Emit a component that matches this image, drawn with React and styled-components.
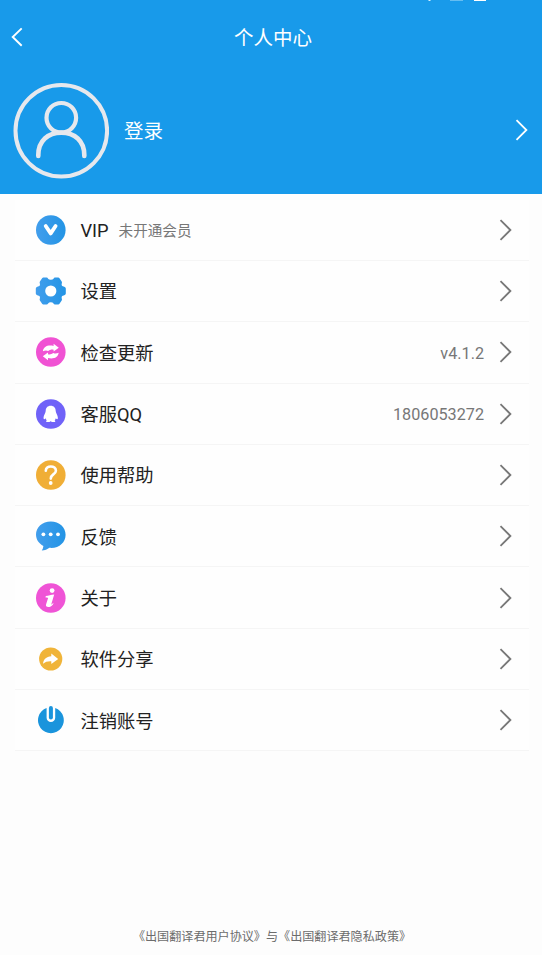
import React from 'react';
import styled, { createGlobalStyle } from 'styled-components';

const GlobalStyle = createGlobalStyle`
  * {
    box-sizing: border-box;
  }
  body {
    margin: 0;
    background-color: #fdfdfd;
    font-family: Roboto, 'Noto Sans CJK SC', sans-serif;
  }
`;

const Page = styled.div`
  position: relative;
  display: flex;
  flex-direction: column;
  width: 542px;
  height: 955px;
  overflow: hidden;
`;

const StatusBar = styled.svg`
  position: absolute;
  top: 0;
  right: 50px;
`;

const Header = styled.header`
  height: 194.4px;
  flex-shrink: 0;
  background-color: #189aea;
  color: #fff;
`;

const TitleBar = styled.div`
  display: grid;
  grid-template-columns: 40px 1fr 38px;
  align-items: center;
  height: 74px;
  padding-left: 2px;
`;

const BackIcon = styled.svg`
  margin-left: 8px;
`;

const Title = styled.h1`
  margin: 0;
  padding-top: 4px;
  font-size: 19.5px;
  line-height: 28px;
  font-weight: 400;
  text-align: center;
`;

const Profile = styled.div`
  display: flex;
  align-items: center;
  height: 113px;
  padding: 0 13px 1px 13px;
`;

const LoginText = styled.span`
  flex: 1;
  margin-left: 15px;
  padding-top: 4px;
  font-size: 19.5px;
  line-height: 28px;
`;

const Menu = styled.ul`
  list-style: none;
  width: 514px;
  margin: 5.3px 0 0 15px;
  padding: 0;
  background-color: #fefefe;
`;

const MenuItem = styled.li`
  display: flex;
  align-items: center;
  height: 61.3px;
  padding: 0 16px 0 20px;
  border-bottom: 1px solid #f5f5f5;
`;

const Label = styled.span`
  margin-left: 14.4px;
  padding-top: 2.6px;
  color: #222;
  font-size: 18.3px;
  line-height: 26px;
`;

const Hint = styled.span`
  margin-left: 10px;
  padding-top: 2px;
  color: #777;
  font-size: 14.6px;
  line-height: 22px;
`;

const Value = styled.span`
  margin-left: auto;
  margin-right: 15px;
  padding-top: 2.6px;
  color: #777;
  font-size: 16.2px;
  line-height: 24px;
`;

const Footer = styled.footer`
  margin-top: auto;
  padding: 0 0 9px 2px;
  color: #6c6c6c;
  font-size: 12.1px;
  line-height: 18px;
  text-align: center;
  white-space: nowrap;
`;

const Chevron = ({ color = '#777' }) => (
  <svg width="14" height="24" viewBox="0 0 14 24" fill="none">
    <path d="M1.5 2.2 L11.4 12 L1.5 21.8" stroke={color} strokeWidth="1.8" />
  </svg>
);

const Avatar = () => (
  <svg width="96" height="98" viewBox="0 0 96 98" fill="none" stroke="#e6e8ed">
    <circle cx="48.3" cy="49.8" r="45.8" strokeWidth="4" />
    <circle cx="48.3" cy="36.8" r="14.8" strokeWidth="4.2" />
    <path
      d="M25.3 75 V74.1 C25.3 59.8 35 51.6 48.3 51.6 S71.3 59.8 71.3 74.1 V75"
      strokeWidth="4.6"
      strokeLinecap="round"
    />
  </svg>
);

const Icon = ({ children }) => (
  <svg width="31" height="30" viewBox="0 0 31 30" fill="none">
    {children}
  </svg>
);

const VipIcon = () => (
  <Icon>
    <defs>
      <linearGradient id="blue" x1="0" x2="1">
        <stop offset="0" stopColor="#429eec" />
        <stop offset="1" stopColor="#2394e5" />
      </linearGradient>
    </defs>
    <circle cx="15.8" cy="15" r="14.8" fill="url(#blue)" />
    <path
      d="M10.7 11 L15.7 18.4 L20.6 11"
      stroke="#fff"
      strokeWidth="3.8"
      strokeLinecap="round"
      strokeLinejoin="round"
    />
  </Icon>
);

const SettingsIcon = () => (
  <Icon>
    <path
      d="M8.2 1.6 H11.6 Q12.6 1.7 13.1 2.7 Q13.8 3.8 15.8 3.8 T18.5 2.7 Q19 1.7 20 1.6 H23.4 Q24.4 1.8 25 2.9 L26.7 5.6 Q27.3 6.8 26.7 7.8 Q26.3 9 27.2 10 L29.3 10.8 Q30.8 11.2 30.8 12.5 V17.5 Q30.8 18.8 29.3 19.2 L27.2 20 Q26.3 21 26.7 22.2 Q27.3 23.4 26.7 24.4 L25 27.1 Q24.4 28.2 23.4 28.5 H20 Q19 28.4 18.5 27.4 Q17.8 26.3 15.8 26.3 T13.1 27.4 Q12.6 28.4 11.6 28.5 H8.2 Q7.2 28.2 6.6 27.1 L4.9 24.4 Q4.3 23.4 4.9 22.2 Q5.3 21 4.4 20 L2.3 19.2 Q.8 18.8 .8 17.5 V12.5 Q.8 11.2 2.3 10.8 L4.4 10 Q5.3 9 4.9 7.8 Q4.3 6.8 4.9 5.6 L6.6 2.9 Q7.2 1.8 8.2 1.6 Z"
      fill="url(#blue)"
    />
    <circle cx="15.8" cy="15" r="5.6" fill="#fff" />
  </Icon>
);

const UpdateIcon = () => (
  <Icon>
    <circle cx="15.8" cy="15" r="14.8" fill="#f052d3" />
    <path
      d="M7.9 14.2 C8.6 9.4 12.8 7.7 18.6 8.9 V6.7 L23.8 10.8 L18.6 14.6 V12.8 C16.6 12.2 15 12.9 13.2 14 C11.8 13.1 9.8 13.2 7.9 14.2 Z"
      fill="#fff"
    />
    <path
      d="M23.7 15.8 C23 20.6 18.8 22.3 13 21.1 V23.3 L7.8 19.2 L13 15.4 V17.2 C15 17.8 16.6 17.1 18.4 16 C19.8 16.9 21.8 16.8 23.7 15.8 Z"
      fill="#fff"
    />
  </Icon>
);

const QQIcon = () => (
  <Icon>
    <circle cx="15.8" cy="15" r="14.8" fill="#7062f8" />
    <path
      d="M15.7 6.8 C12.5 6.8 10.7 9 10.7 12 C10.7 14 8.5 16.2 8.5 19 C8.7 20.7 9.6 20.5 10.6 19.2 C10.8 20.1 11.2 20.7 11.8 21.2 C10.4 22 11 23.1 12.8 23.1 C14.3 23.1 15 22.7 15.7 22.2 C16.4 22.7 17.1 23.1 18.6 23.1 C20.4 23.1 21 22 19.6 21.2 C20.2 20.7 20.6 20.1 20.8 19.2 C21.8 20.5 22.7 20.7 22.9 19 C22.9 16.2 20.7 14 20.7 12 C20.7 9 18.9 6.8 15.7 6.8 Z"
      fill="#fff"
    />
  </Icon>
);

const HelpIcon = () => (
  <Icon>
    <circle cx="15.8" cy="15" r="14.8" fill="#f0ae36" />
    <path
      d="M10.8 10.8 C10.8 7.9 13 6.5 15.8 6.5 C18.7 6.5 20.9 8.1 20.9 10.7 C20.9 14.3 15.8 14.1 15.8 18.6"
      stroke="#fff"
      strokeWidth="2.6"
      strokeLinecap="round"
    />
    <circle cx="15.7" cy="23" r="1.9" fill="#fff" />
  </Icon>
);

const FeedbackIcon = () => (
  <Icon>
    <path
      d="M15.8 .4 C7.3 .4 1 6 1 13.5 C1 18.5 3.8 22.4 8.4 24.9 C8.2 26.5 7.7 28.1 6.8 29.5 C9.9 29.3 12.4 28.5 14.4 26.8 C23.8 27.7 30.6 21.6 30.6 13.7 C30.6 6 24.3 .4 15.8 .4 Z"
      fill="url(#blue)"
    />
    <circle cx="8.4" cy="13.3" r="1.9" fill="#fff" />
    <circle cx="15.7" cy="13.3" r="1.9" fill="#fff" />
    <circle cx="23" cy="13.3" r="1.9" fill="#fff" />
  </Icon>
);

const AboutIcon = () => (
  <Icon>
    <circle cx="15.8" cy="15" r="14.8" fill="#ef54d6" />
    <circle cx="17.1" cy="7.6" r="2.4" fill="#fff" />
    <path
      d="M10.8 13.1 C13.5 12.6 15.9 11.7 19.2 11.4 L16.2 21.4 C17 21.5 17.6 20.7 18.5 19.8 C18.3 22.1 15.9 24.1 13.4 24.1 C11.3 24.1 10.6 23 11.1 21.3 L13.1 14.9 C12.5 14.4 11.6 14.4 10.5 14.4 Z"
      fill="#fff"
    />
  </Icon>
);

const ShareIcon = () => (
  <Icon>
    <circle cx="15.7" cy="15" r="11.6" fill="#f0b439" />
    <path
      d="M16.3 9.6 L23.2 15 L16.3 20.1 V17.2 C12.7 17 10.3 17.8 8 19.7 C8.5 15.3 11.1 12.6 16.3 12.2 Z"
      fill="#fff"
    />
  </Icon>
);

const PowerIcon = () => (
  <Icon>
    <path
      d="M11.6 3.1 A12.9 12.9 0 1 0 20.2 3.1 V12.8 A4.3 4.3 0 0 1 11.6 12.8 Z"
      fill="#1a94dc"
    />
    <rect x="13.9" y="1" width="4" height="13.6" rx="2" fill="#1a94dc" />
  </Icon>
);

const items = [
  { label: 'VIP', hint: '未开通会员', icon: VipIcon },
  { label: '设置', icon: SettingsIcon },
  { label: '检查更新', value: 'v4.1.2', icon: UpdateIcon },
  { label: '客服QQ', value: '1806053272', icon: QQIcon },
  { label: '使用帮助', icon: HelpIcon },
  { label: '反馈', icon: FeedbackIcon },
  { label: '关于', icon: AboutIcon },
  { label: '软件分享', icon: ShareIcon },
  { label: '注销账号', icon: PowerIcon },
];

const App = () => (
  <Page>
    <GlobalStyle />
    <Header>
      <TitleBar>
        <BackIcon width="14" height="20" viewBox="0 0 14 20" fill="none">
          <path d="M11.7 1.4 L2.7 10 L11.7 18.7" stroke="#fff" strokeWidth="1.9" />
        </BackIcon>
        <Title>个人中心</Title>
      </TitleBar>
      <Profile>
        <Avatar />
        <LoginText>登录</LoginText>
        <Chevron color="#fff" />
      </Profile>
    </Header>
    <StatusBar width="70" height="2" viewBox="0 0 70 2">
      <rect x="6.5" width="2" height="1" fill="#d9f0fd" />
      <rect x="28" width="13" height="1" fill="#65bdf1" />
      <rect x="52" width="12" height="1" fill="#fff" />
    </StatusBar>
    <Menu>
      {items.map(({ label, hint, value, icon: ItemIcon }) => (
        <MenuItem key={label}>
          <ItemIcon />
          <Label>{label}</Label>
          {hint && <Hint>{hint}</Hint>}
          <Value>{value}</Value>
          <Chevron />
        </MenuItem>
      ))}
    </Menu>
    <Footer>《出国翻译君用户协议》与《出国翻译君隐私政策》</Footer>
  </Page>
);

export default App;
